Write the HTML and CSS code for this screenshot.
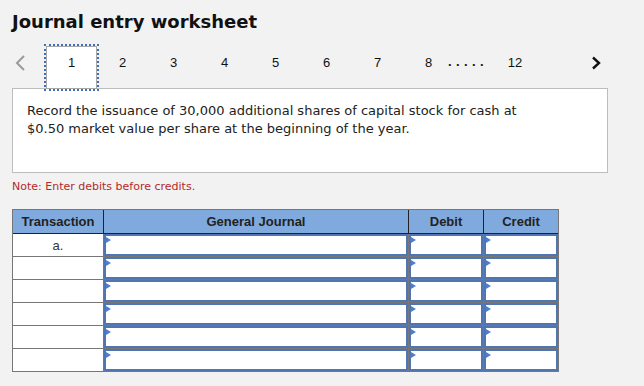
FILE: index.html
```html
<!DOCTYPE html>
<html lang="en">
<head>
    <meta charset="UTF-8">
    <title>Journal entry worksheet</title>
    <link rel="stylesheet" href="styles.css">
</head>
<body>
    <div class="page">
        <h1 class="title">Journal entry worksheet</h1>

        <div class="pager">
            <span class="arrow prev">
                <svg width="12" height="16" viewBox="0 0 12 16"><polyline points="10,1 3,8 10,15" fill="none" stroke="#9a9a9a" stroke-width="2"/></svg>
            </span>
            <span class="page-item active">1</span>
            <span class="page-item">2</span>
            <span class="page-item">3</span>
            <span class="page-item">4</span>
            <span class="page-item">5</span>
            <span class="page-item">6</span>
            <span class="page-item">7</span>
            <span class="page-item">8</span>
            <span class="dots">.....</span>
            <span class="page-item last">12</span>
            <span class="arrow next">
                <svg width="12" height="14" viewBox="0 0 12 14"><polyline points="3,1.5 9,7 3,12.5" fill="none" stroke="#111" stroke-width="2.4"/></svg>
            </span>
        </div>

        <div class="question">
            <p>Record the issuance of 30,000 additional shares of capital stock for cash at<br>$0.50 market value per share at the beginning of the year.</p>
        </div>

        <p class="note">Note: Enter debits before credits.</p>

        <table class="journal">
            <thead>
                <tr>
                    <th class="col-trans">Transaction</th>
                    <th class="col-journal">General Journal</th>
                    <th class="col-debit">Debit</th>
                    <th class="col-credit">Credit</th>
                </tr>
            </thead>
            <tbody>
                <tr>
                    <td class="trans">a.</td>
                    <td><div class="field"></div></td>
                    <td><div class="field"></div></td>
                    <td><div class="field"></div></td>
                </tr>
                <tr>
                    <td class="trans"></td>
                    <td><div class="field"></div></td>
                    <td><div class="field"></div></td>
                    <td><div class="field"></div></td>
                </tr>
                <tr>
                    <td class="trans"></td>
                    <td><div class="field"></div></td>
                    <td><div class="field"></div></td>
                    <td><div class="field"></div></td>
                </tr>
                <tr>
                    <td class="trans"></td>
                    <td><div class="field"></div></td>
                    <td><div class="field"></div></td>
                    <td><div class="field"></div></td>
                </tr>
                <tr>
                    <td class="trans"></td>
                    <td><div class="field"></div></td>
                    <td><div class="field"></div></td>
                    <td><div class="field"></div></td>
                </tr>
                <tr>
                    <td class="trans"></td>
                    <td><div class="field"></div></td>
                    <td><div class="field"></div></td>
                    <td><div class="field"></div></td>
                </tr>
            </tbody>
        </table>
    </div>
</body>
</html>
```

FILE: styles.css
```css
* {
    box-sizing: border-box;
    margin: 0;
    padding: 0;
}

body {
    background: #f2f2f2;
    font-family: "Liberation Sans", Arial, sans-serif;
    color: #222;
}

.page {
    padding: 11px 12px 0 12px;
}

.title {
    font-family: "DejaVu Sans", Verdana, sans-serif;
    font-size: 18px;
    line-height: 21px;
    font-weight: bold;
    color: #111;
}

.pager {
    display: flex;
    align-items: center;
    height: 43px;
    margin-top: 13px;
    font-size: 13px;
    color: #111;
}

.arrow {
    display: flex;
    align-items: center;
    position: relative;
    top: -4px;
}

.prev {
    width: 34px;
    padding-left: 2px;
}

.next {
    margin-left: auto;
    margin-right: 30px;
}

.page-item {
    width: 51px;
    height: 43px;
    padding-bottom: 9px;
    display: flex;
    align-items: center;
    justify-content: center;
}

.page-item.active {
    background: white;
    border: 1px solid #a8a8a8;
    outline: 2px dotted #3c6fc0;
    outline-offset: 0;
    position: relative;
    top: 1px;
    padding-bottom: 10px;
}

.dots {
    margin-left: -6px;
    width: 37px;
    font-weight: bold;
    letter-spacing: 4.4px;
    position: relative;
    top: -5px;
}

.page-item.last {
    width: 30px;
    margin-left: 15px;
}

.question {
    width: 596px;
    height: 85px;
    background: white;
    border: 1px solid #bdbdbd;
    padding: 13px 14px 0 14px;
}

.question p {
    font-family: "DejaVu Sans", Verdana, sans-serif;
    font-size: 13px;
    line-height: 18px;
    color: #222;
}

.note {
    font-family: "DejaVu Sans", Verdana, sans-serif;
    font-size: 11px;
    line-height: 14px;
    color: #b32a2a;
    margin-top: 7px;
}

.journal {
    margin-top: 15px;
    border-collapse: separate;
    border-spacing: 0;
    border: 1px solid #777;
    background: white;
    table-layout: fixed;
}

.journal th {
    background: #80aadd;
    font-size: 13px;
    font-weight: bold;
    color: #222;
    height: 24px;
    padding: 0;
    text-align: center;
    border-bottom: 1px solid #222;
}

.journal th + th {
    border-left: 1px solid #222;
}

.col-trans { width: 90px; }
.col-journal { width: 305px; }
.col-debit { width: 75px; }
.col-credit { width: 75px; }

.journal td {
    height: 23px;
    padding: 0;
    border-top: 1px solid #777;
}

.journal tbody tr:first-child td {
    border-top: none;
    height: 22px;
}

.journal td + td {
    border-left: 1px solid #777;
}

.trans {
    text-align: center;
    font-size: 13px;
    color: #333;
    vertical-align: middle;
}

.field {
    height: 22px;
    border: 2px solid #5075b2;
    position: relative;
    background: white;
}

.field::before {
    content: "";
    position: absolute;
    left: 0;
    top: 1px;
    border-left: 5px solid #4d7fd0;
    border-top: 3px solid transparent;
    border-bottom: 3px solid transparent;
}
```
